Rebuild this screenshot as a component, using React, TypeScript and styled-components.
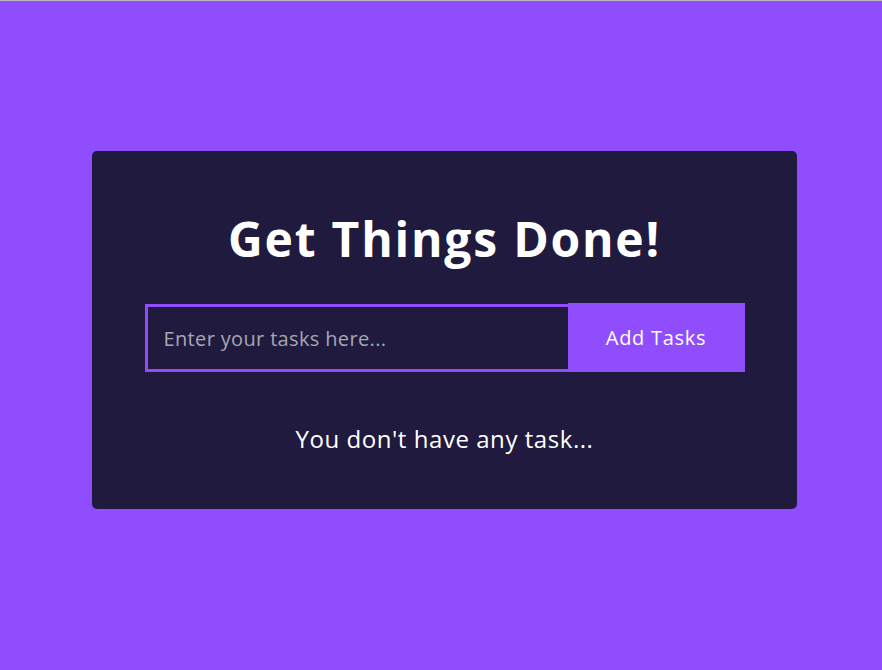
import React from "react";
import styled, { createGlobalStyle } from "styled-components";

const GlobalStyle = createGlobalStyle`
  * { box-sizing: border-box; }
  html, body { margin: 0; padding: 0; }
  body {
    background: #8f4dfd;
    font-family: "Open Sans", "DejaVu Sans", sans-serif;
    border-top: 1px solid #bdb8c4;
    min-height: 670px;
  }
`;

const Page = styled.main`
  padding: 150px 0 0 6px;
`;

const Card = styled.section`
  width: 705px;
  margin: 0 auto;
  background: #1f1a3e;
  border-radius: 5px;
  padding: 59px 52px 55px 53px;
  display: flex;
  flex-direction: column;
  align-items: center;
`;

const Title = styled.h1`
  margin: 0;
  color: #ffffff;
  font-size: 48px;
  line-height: 58px;
  font-weight: 700;
  letter-spacing: 1.8px;
  text-align: center;
`;

const Form = styled.form`
  margin-top: 35px;
  width: 600px;
  height: 69px;
  display: flex;
`;

const Input = styled.input`
  flex: 1;
  min-width: 0;
  height: 68px;
  margin-top: 1px;
  background: transparent;
  border: 3px solid #8f4dfd;
  border-right: none;
  padding: 0 16px;
  color: #ffffff;
  font-family: inherit;
  font-size: 20px;
  letter-spacing: 0.35px;
  outline: none;
  &::placeholder { color: #a8a6b4; }
`;

const Button = styled.button`
  width: 177px;
  height: 69px;
  border: none;
  background: #8f4dfd;
  color: #ffffff;
  font-family: inherit;
  font-size: 20px;
  letter-spacing: 0.7px;
  cursor: pointer;
`;

const Empty = styled.p`
  margin: 52px 0 0;
  color: #ffffff;
  font-size: 24px;
  line-height: 30px;
  letter-spacing: 0.55px;
  text-align: center;
`;

export default function App() {
  return (
    <>
      <GlobalStyle />
      <Page>
        <Card>
          <Title>Get Things Done!</Title>
          <Form onSubmit={(e) => e.preventDefault()}>
            <Input type="text" placeholder="Enter your tasks here..." />
            <Button type="submit">Add Tasks</Button>
          </Form>
          <Empty>You don't have any task...</Empty>
        </Card>
      </Page>
    </>
  );
}
